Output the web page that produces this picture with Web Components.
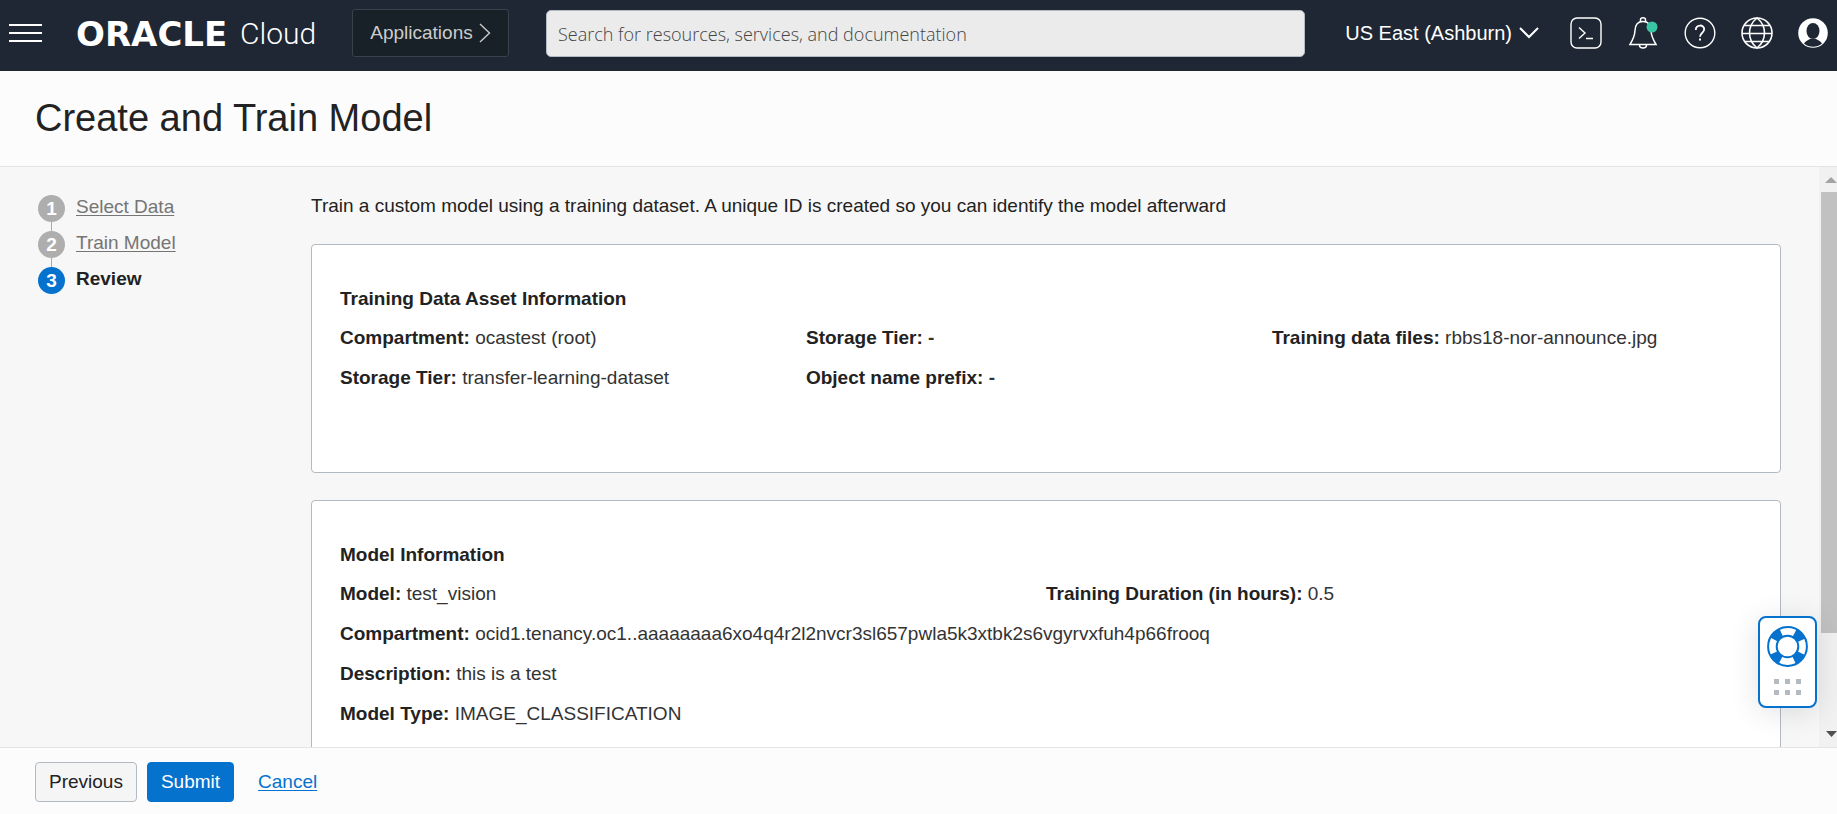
<!DOCTYPE html>
<html lang="en">
<head>
<meta charset="utf-8">
<meta name="viewport" content="width=device-width, initial-scale=1">
<title>Create and Train Model</title>
<style>
  html, body { height: 100%; }
  body {
    margin: 0;
    overflow: hidden;
    font-family: "Liberation Sans", Arial, sans-serif;
    font-size: 19px;
    line-height: 24px;
    color: #222;
    background: #f7f7f7;
  }
</style>
</head>
<body>
<console-page>
  <console-header slot="header"></console-header>
  <page-title slot="title">Create and Train Model</page-title>
  <step-list slot="steps">
    <step-item number="1">Select Data</step-item>
    <step-item number="2">Train Model</step-item>
    <step-item number="3" current>Review</step-item>
  </step-list>
  <p slot="intro">Train a custom model using a training dataset. A unique ID is created so you can identify the model afterward</p>
  <info-card columns="3" heading="Training Data Asset Information">
    <info-field label="Compartment">ocastest (root)</info-field>
    <info-field label="Storage Tier"><b>-</b></info-field>
    <info-field label="Training data files">rbbs18-nor-announce.jpg</info-field>
    <info-field label="Storage Tier">transfer-learning-dataset</info-field>
    <info-field label="Object name prefix"><b>-</b></info-field>
  </info-card>
  <info-card columns="2" heading="Model Information">
    <info-field label="Model">test_vision</info-field>
    <info-field label="Training Duration (in hours)">0.5</info-field>
    <info-field wide label="Compartment">ocid1.tenancy.oc1..aaaaaaaa6xo4q4r2l2nvcr3sl657pwla5k3xtbk2s6vgyrvxfuh4p66frooq</info-field>
    <info-field wide label="Description">this is a test</info-field>
    <info-field wide label="Model Type">IMAGE_CLASSIFICATION</info-field>
  </info-card>
  <scroll-track slot="scroll"></scroll-track>
  <action-bar slot="actions">
    <action-button>Previous</action-button>
    <action-button primary>Submit</action-button>
    <action-link>Cancel</action-link>
  </action-bar>
  <help-widget slot="help"></help-widget>
</console-page>

<script>
const define = (name, markup) => customElements.define(name, class extends HTMLElement {
  constructor() {
    super();
    this.attachShadow({ mode: 'open' }).innerHTML = typeof markup === 'function' ? markup(this) : markup;
  }
});

define('console-page', `
  <style>
    :host { display: flex; flex-direction: column; height: 100vh; position: relative; }
    .body { flex: 1; min-height: 0; display: flex; overflow: hidden; }
    nav { flex: none; box-sizing: border-box; width: 311px; padding: 28px 0 0 38px; }
    main { flex: 1; min-width: 0; display: flex; flex-direction: column; gap: 27px; padding: 27px 38px 0 0; }
    ::slotted(p) { margin: 0 0 -1px; }
    ::slotted(help-widget) { position: absolute; right: 20px; bottom: 106px; }
  </style>
  <slot name="header"></slot>
  <slot name="title"></slot>
  <div class="body">
    <nav aria-label="Steps"><slot name="steps"></slot></nav>
    <main><slot name="intro"></slot><slot></slot></main>
    <slot name="scroll"></slot>
  </div>
  <slot name="actions"></slot>
  <slot name="help"></slot>`);

define('console-header', `
  <style>
    :host { display: block; flex: none; background: #1e2733; color: #fff; }
    header { display: flex; align-items: center; height: 71px; padding: 0 9px; box-sizing: border-box; }
    button { font: inherit; color: inherit; background: none; border: 0; padding: 0; margin: 0; display: flex; align-items: center; }
    svg { display: block; flex: none; }
    .menu { width: 33px; margin: 0 34px 6px 0; }
    .logo { display: flex; align-items: center; gap: 8px; width: 276px; flex: none; color: #fff; text-decoration: none; padding-bottom: 4px; box-sizing: border-box; }
    .word { width: 156px; font: bold 34px/36px "DejaVu Sans", sans-serif; }
    .cloud { font: 300 30px/36px Roboto, sans-serif; }
    .apps { box-sizing: border-box; width: 157px; height: 48px; border: 1px solid #38424d; border-radius: 3px; background: #182028; color: #ccc; justify-content: center; gap: 6px; margin: 0 37px 5px 0; }
    input { flex: 1; min-width: 0; height: 47px; box-sizing: border-box; border: 1px solid #b3bac2; border-radius: 5px; background: #ebebeb; padding: 0 11px; font: 300 18px/24px "Open Sans", sans-serif; color: #333; margin: 0 40px 4px 0; }
    input::placeholder { color: #444; opacity: 1; }
    .region { font-size: 20px; gap: 7px; margin: 0 31px 5px 0; white-space: nowrap; }
    .tools { display: flex; align-items: center; gap: 25px; margin-bottom: 5px; }
  </style>
  <header>
    <button class="menu" aria-label="Menu"><svg width="33" height="20" viewBox="0 0 33 20" stroke="#fff" stroke-width="2"><path d="M0 2h33M0 10h33M0 18h33"/></svg></button>
    <a class="logo" href="#"><span class="word">ORACLE</span><span class="cloud">Cloud</span></a>
    <button class="apps">Applications<svg width="12" height="20" viewBox="0 0 12 20" fill="none" stroke="#ccc" stroke-width="1.4"><path d="M1 1l9.500 9L1 19"/></svg></button>
    <input type="search" aria-label="Search" placeholder="Search for resources, services, and documentation">
    <button class="region">US East (Ashburn)<svg width="20" height="12" viewBox="0 0 20 12" fill="none" stroke="#fff" stroke-width="2"><path d="M1 1l9 9 9-9"/></svg></button>
    <div class="tools">
      <button aria-label="Cloud Shell"><svg width="32" height="32" viewBox="0 0 32 32" fill="none" stroke="#fff" stroke-width="1.4"><rect x="1" y="1" width="30" height="30" rx="6"/><path d="M9 10.500l6 5.500-6 5.500M16 21.500h7"/></svg></button>
      <button aria-label="Notifications"><svg width="32" height="32" viewBox="0 0 32 32" fill="none" stroke="#fff" stroke-width="1.500"><path d="M13.500 4.500V2.800a2.500 2 0 0 1 5 0v1.700M3 27.500c3-5 4.800-8 5-14 .2-5.500 3-9 8-9s7.800 3.500 8 9c.2 6 2 9 5 14zM12.500 28a3.500 3 0 0 0 7 0"/><circle cx="25" cy="10" r="5.500" fill="#3ac6a5" stroke="none"/></svg></button>
      <button aria-label="Help"><svg width="32" height="32" viewBox="0 0 32 32" fill="none" stroke="#fff" stroke-width="1.400"><circle cx="16" cy="16" r="14.800"/><path stroke-width="1.800" d="M11.800 13c0-6 8.400-5.700 8.400-.7 0 3.700-4.200 3.700-4.200 7.400"/><path stroke-width="2" d="M16 21.500v2"/></svg></button>
      <button aria-label="Language"><svg width="32" height="32" viewBox="0 0 32 32" fill="none" stroke="#fff" stroke-width="1.600"><circle cx="16" cy="16" r="15"/><path d="M1 16.500h30M4 8.500h24M4 24.500h24M16 1c-10 8-10 22 0 30 10-8 10-22 0-30z"/></svg></button>
      <button aria-label="Profile"><svg width="30" height="32" viewBox="0 0 30 32"><circle cx="15" cy="16" r="14.800" fill="#fff"/><ellipse cx="15" cy="14" rx="6.500" ry="8" fill="#1e2733"/><path fill="#1e2733" d="M6 26.500c1-2 3.500-3 6-4.500h6c2.500 1.500 5 2.500 6 4.500-5 4.300-13 4.300-18 0z"/></svg></button>
    </div>
  </header>`);

define('page-title', `
  <style>
    :host { display: block; flex: none; background: #fcfcfc; border-bottom: 1px solid #e4e4e4; }
    h1 { margin: 0; padding: 23px 35px 24px; font-weight: normal; font-size: 38px; line-height: 48px; }
  </style>
  <h1><slot></slot></h1>`);

define('step-list', `
  <style>:host { display: flex; flex-direction: column; }</style>
  <slot></slot>`);

define('step-item', el => {
  const current = el.hasAttribute('current');
  return `
  <style>
    :host { display: flex; gap: 11px; color: #757575; }
    .rail { display: flex; flex-direction: column; align-items: center; width: 27px; height: 36px; }
    .num { width: 27px; height: 27px; line-height: 27px; border-radius: 50%; background: #aeaeae; color: #fff; text-align: center; font-weight: bold; }
    .rail::after { content: ""; flex: 1; width: 1px; background: #aaa; }
    a { color: inherit; align-self: flex-start; text-underline-offset: 2px; text-decoration-thickness: 1px; }
    :host([current]) { color: #222; font-weight: bold; }
    :host([current]) .num { background: #0572ce; }
    :host([current]) .rail::after { display: none; }
  </style>
  <div class="rail"><span class="num">${el.getAttribute('number')}</span></div>
  ${current ? '<span aria-current="step"><slot></slot></span>' : '<a href="#"><slot></slot></a>'}`;
});

define('info-card', el => `
  <style>
    :host { display: block; flex: none; background: #fff; border: 1px solid #b3bac2; border-radius: 4px; padding: 42px 28px 82px; }
    h2 { margin: 0 0 15px; font-size: 19px; line-height: 24px; }
    .grid { display: grid; row-gap: 16px; }
    .c3 { grid-template-columns: repeat(3, 33%); }
    .c2 { grid-template-columns: repeat(2, 50%); }
    ::slotted([wide]) { grid-column: 1 / -1; }
  </style>
  <h2>${el.getAttribute('heading')}</h2>
  <div class="grid c${el.getAttribute('columns')}"><slot></slot></div>`);

define('info-field', el => `
  <style>:host { display: block; color: #333; } strong { color: #222; }</style>
  <strong>${el.getAttribute('label')}:</strong> <slot></slot>`);

define('scroll-track', `
  <style>
    :host { display: flex; flex-direction: column; align-items: flex-end; flex: none; width: 18px; background: #f1f1f1; }
    .thumb { width: 16px; flex: 441; background: #c1c1c1; }
    .rest { flex: 90; }
    svg { display: block; flex: none; }
  </style>
  <svg width="16" height="25" viewBox="0 0 16 25"><path fill="#a3a3a3" d="M4 16l6-6 6 6z"/></svg>
  <div class="thumb"></div><div class="rest"></div>
  <svg width="16" height="24" viewBox="0 0 16 24"><path fill="#505050" d="M5 8h11l-5.500 6z"/></svg>`);

define('action-bar', `
  <style>
    :host { display: flex; flex: none; align-items: center; gap: 10px; background: #fcfcfc; border-top: 1px solid #e4e4e4; padding: 14px 35px 12px; }
  </style>
  <slot></slot>`);

define('action-button', `
  <style>
    :host { display: block; }
    button { display: block; box-sizing: border-box; height: 40px; padding: 0 13px; font: inherit; color: #222; background: #f5f5f5; border: 1px solid #b3bac2; border-radius: 4px; }
    :host([primary]) button { background: #0572ce; border-color: #0572ce; color: #fff; }
  </style>
  <button type="button"><slot></slot></button>`);

define('action-link', `
  <style>
    :host { display: block; margin-left: 14px; }
    a { color: #0572ce; text-underline-offset: 2px; text-decoration-thickness: 1px; }
  </style>
  <a href="#"><slot></slot></a>`);

define('help-widget', `
  <style>
    :host { display: block; }
    button { box-sizing: border-box; width: 59px; height: 92px; display: flex; flex-direction: column; align-items: center; gap: 12px; padding: 8px 0 0; border: 2px solid #0572ce; border-radius: 8px; background: #fff; box-shadow: 0 4px 30px rgba(0,0,0,.12); }
    svg { display: block; flex: none; }
  </style>
  <button aria-label="Support">
    <svg width="41" height="41" viewBox="0 0 41 41" fill="none" stroke="#0572ce">
      <circle cx="20.500" cy="20.500" r="15.200" stroke-width="8.500" stroke-dasharray="10 13.876" stroke-dashoffset="-6.938"/>
      <circle cx="20.500" cy="20.500" r="19.400" stroke-width="2"/>
      <circle cx="20.500" cy="20.500" r="10.800" stroke-width="2"/>
    </svg>
    <svg width="27" height="16" viewBox="0 0 27 16" fill="#b3bac2"><path d="M0 0h5v5H0zM11 0h5v5h-5zM22 0h5v5h-5zM0 11h5v5H0zM11 11h5v5h-5zM22 11h5v5h-5z"/></svg>
  </button>`);
</script>
</body>
</html>
